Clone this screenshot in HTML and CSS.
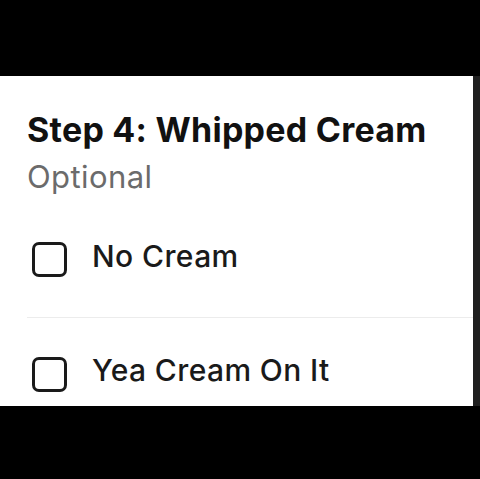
FILE: index.html
```html
<!DOCTYPE html>
<html lang="en">
<head>
	<meta charset="UTF-8">
	<title>Whipped Cream</title>
	<link rel="stylesheet" href="styles.css">
</head>
<body>
	<div class="screen">
		<section class="sheet">
			<h2 class="step-title">Step 4: Whipped Cream</h2>
			<p class="step-note">Optional</p>
			<ul class="options">
				<li class="option">
					<label><input type="checkbox" class="check"><span class="label">No Cream</span></label>
				</li>
				<li class="option">
					<label><input type="checkbox" class="check"><span class="label">Yea Cream On It</span></label>
				</li>
			</ul>
		</section>
		<div class="edge"></div>
	</div>
</body>
</html>
```

FILE: styles.css
```css
* { margin: 0; padding: 0; box-sizing: border-box; }
body {
	background-color: #000;
	font-family: "Inter", "Liberation Sans", sans-serif;
	font-variant-ligatures: none;
}
.screen {
	display: flex;
	margin-top: 76px;
	height: 330px;
}
.sheet {
	width: 473px;
	background-color: #fff;
	overflow: hidden;
	padding: 34px 0 0 27px;
}
.edge {
	flex: 1;
	background-color: #1f1f1f;
}
.step-title {
	font-size: 34px;
	font-weight: 700;
	line-height: 1.2;
	letter-spacing: 0.25px;
	color: #111;
}
.step-note {
	font-size: 31px;
	line-height: 1.2;
	letter-spacing: 0.4px;
	color: #6b6b6b;
	margin-top: 7px;
}
.options {
	list-style: none;
	margin-top: 8px;
}
.option {
	height: 114px;
	display: flex;
	align-items: center;
	padding-left: 5px;
}
.option + .option {
	border-top: 1px solid #ececec;
}
.option label {
	display: flex;
	align-items: center;
	gap: 25px;
}
.check {
	appearance: none;
	width: 35px;
	height: 35px;
	border: 3.5px solid #1a1a1a;
	border-radius: 7px;
	background-color: #fff;
}
.label {
	font-size: 30px;
	font-weight: 500;
	line-height: 1.2;
	letter-spacing: 0.4px;
	padding-bottom: 8px;
	color: #1a1a1a;
}
```
